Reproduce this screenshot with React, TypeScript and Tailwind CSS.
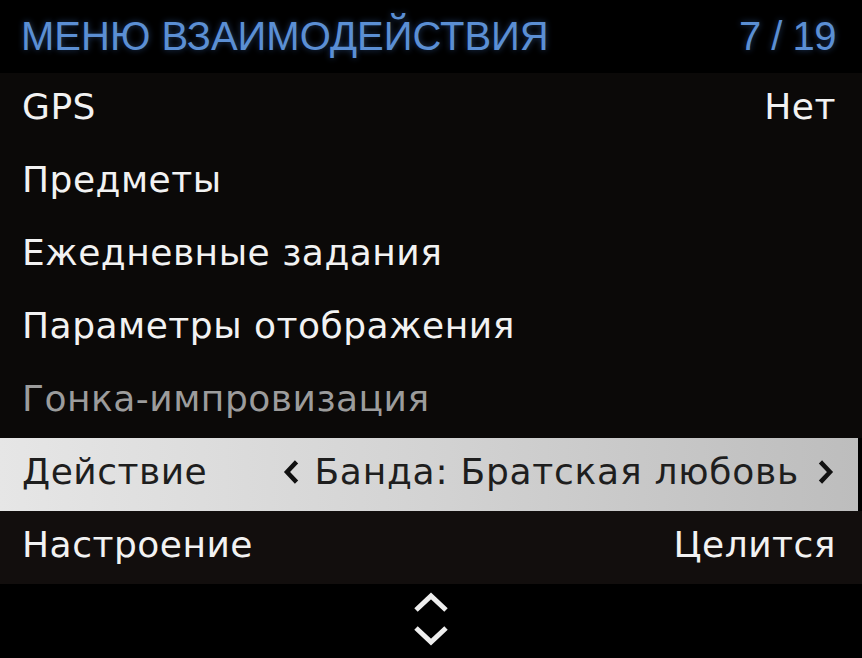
import React from "react";

const rowFont = { fontFamily: '"DejaVu Sans", "Liberation Sans", sans-serif' };

function Chevron({ dir }: { dir: "left" | "right" }) {
  return (
    <svg width="18" height="24" viewBox="0 0 18 24" className="shrink-0">
      <path
        d={dir === "left" ? "M13 3.5 L5 12 L13 20.5" : "M5 3.5 L13 12 L5 20.5"}
        fill="none"
        stroke="#111"
        strokeWidth="4.5"
        strokeLinecap="square"
        strokeLinejoin="miter"
      />
    </svg>
  );
}

function Row({
  label,
  value,
  dim,
  bg,
}: {
  label: string;
  value?: string;
  dim?: boolean;
  bg?: string;
}) {
  return (
    <div
      className={`h-[73px] flex items-center justify-between pl-[22px] pr-[26px] pb-[5px] text-[36px] leading-none tracking-[0.5px] ${
        dim ? "text-[#9c9c9c]" : "text-[#f2f2f2]"
      } ${bg ?? "bg-[#0b0908]"}`}
      style={rowFont}
    >
      <span>{label}</span>
      {value && <span>{value}</span>}
    </div>
  );
}

export default function App() {
  return (
    <div className="w-[862px] h-[658px] bg-black flex flex-col overflow-hidden">
      <div
        className="h-[73px] flex items-center justify-between pl-[21px] pr-[26px] pb-[2px] text-[40px] leading-none text-[#5b8fd4]"
        style={{
          fontFamily: '"Liberation Sans", Arial, sans-serif',
          textShadow: "0 0 6px rgba(70,130,220,0.45)",
        }}
      >
        <span className="tracking-[0px]">МЕНЮ ВЗАИМОДЕЙСТВИЯ</span>
        <span className="tracking-[-0.5px]">7 / 19</span>
      </div>
      <Row label="GPS" value="Нет" />
      <Row label="Предметы" />
      <Row label="Ежедневные задания" />
      <Row label="Параметры отображения" />
      <Row label="Гонка-импровизация" dim />
      <div
        className="h-[73px] mr-[4px] flex items-center justify-between pl-[22px] pr-[23px] pb-[5px] text-[36px] leading-none tracking-[0.5px] text-[#1e1e1e] bg-gradient-to-r from-[#e6e6e6] via-[#d3d3d3] to-[#bdbdbd]"
        style={rowFont}
      >
        <span>Действие</span>
        <span className="flex items-center">
          <Chevron dir="left" />
          <span className="ml-[14px] mr-[18px] tracking-[0.75px]">Банда: Братская любовь</span>
          <Chevron dir="right" />
        </span>
      </div>
      <Row label="Настроение" value="Целится" bg="bg-[#120e0d]" />
      <div className="flex-1 flex flex-col items-center justify-center gap-[12px] pb-[4px]">
        <svg width="38" height="22" viewBox="0 0 38 22">
          <path d="M4 19 L19 5 L34 19" fill="none" stroke="#eeeeee" strokeWidth="5" />
        </svg>
        <svg width="38" height="22" viewBox="0 0 38 22">
          <path d="M4 3 L19 17 L34 3" fill="none" stroke="#eeeeee" strokeWidth="5" />
        </svg>
      </div>
    </div>
  );
}
